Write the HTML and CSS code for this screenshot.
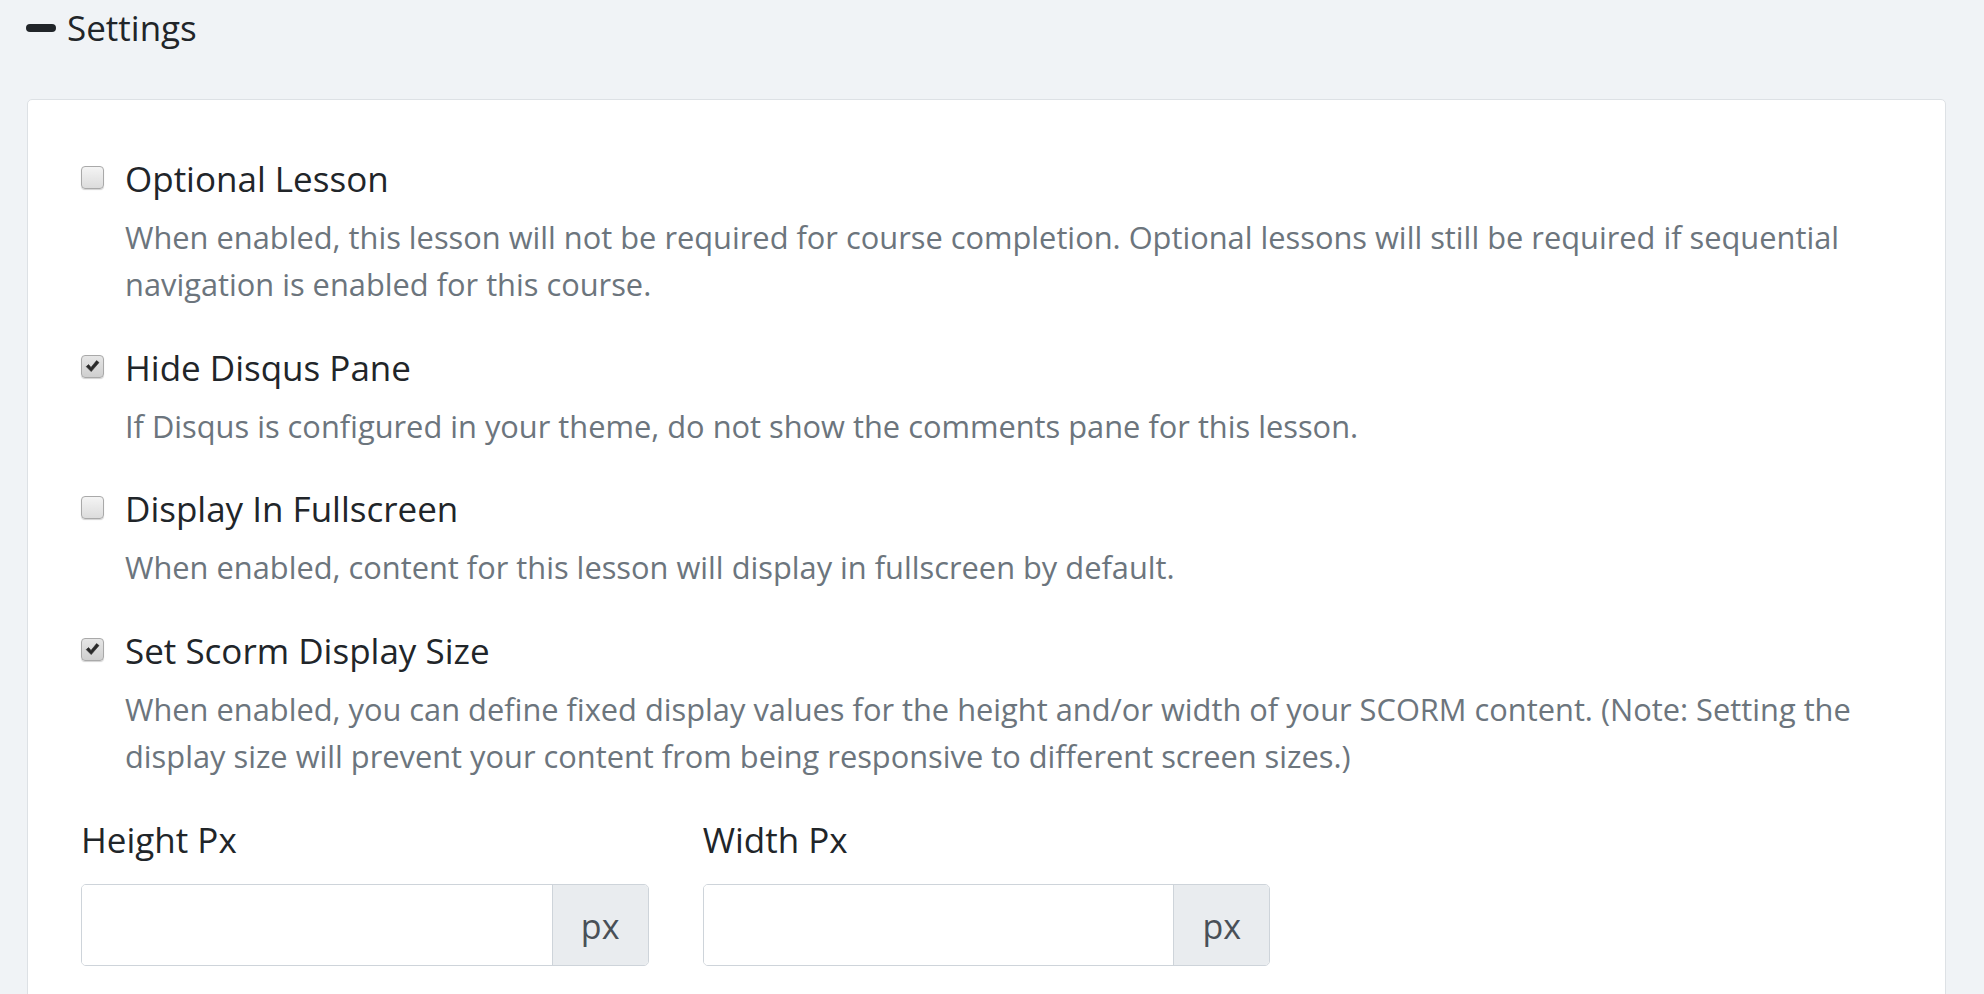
FILE: index.html
```html
<!DOCTYPE html>
<html lang="en">
<head>
<meta charset="utf-8">
<title>Settings</title>
<link rel="stylesheet" href="styles.css">
</head>
<body>
<div class="page">
  <div class="section-title">
    <span class="minus"></span>
    <span class="title-text">Settings</span>
  </div>
  <div class="card">
    <div class="form-check">
      <span class="checkbox"></span>
      <div class="check-body">
        <div class="check-label">Optional Lesson</div>
        <div class="check-desc">When enabled, this lesson will not be required for course completion. Optional lessons will still be required if sequential navigation is enabled for this course.</div>
      </div>
    </div>
    <div class="form-check">
      <span class="checkbox checked"><svg viewBox="0 0 21 21" width="21" height="21"><path d="M4.2 10.6 L6.6 8.6 L9 11.4 L14.6 4.6 L17 6.6 L9.2 15.6 Z" fill="#2a2a2a" stroke="#2a2a2a" stroke-width="0.6" stroke-linejoin="round"/></svg></span>
      <div class="check-body">
        <div class="check-label">Hide Disqus Pane</div>
        <div class="check-desc">If Disqus is configured in your theme, do not show the comments pane for this lesson.</div>
      </div>
    </div>
    <div class="form-check">
      <span class="checkbox"></span>
      <div class="check-body">
        <div class="check-label">Display In Fullscreen</div>
        <div class="check-desc">When enabled, content for this lesson will display in fullscreen by default.</div>
      </div>
    </div>
    <div class="form-check">
      <span class="checkbox checked"><svg viewBox="0 0 21 21" width="21" height="21"><path d="M4.2 10.6 L6.6 8.6 L9 11.4 L14.6 4.6 L17 6.6 L9.2 15.6 Z" fill="#2a2a2a" stroke="#2a2a2a" stroke-width="0.6" stroke-linejoin="round"/></svg></span>
      <div class="check-body">
        <div class="check-label">Set Scorm Display Size</div>
        <div class="check-desc">When enabled, you can define fixed display values for the height and/or width of your SCORM content. (Note: Setting the display size will prevent your content from being responsive to different screen sizes.)</div>
      </div>
    </div>
    <div class="size-row">
      <div class="field">
        <div class="field-label">Height Px</div>
        <div class="input-group">
          <input class="input" type="text">
          <span class="addon">px</span>
        </div>
      </div>
      <div class="field">
        <div class="field-label">Width Px</div>
        <div class="input-group">
          <input class="input" type="text">
          <span class="addon">px</span>
        </div>
      </div>
    </div>
  </div>
</div>
</body>
</html>
```
FILE: styles.css
```css
html, body {
  margin: 0;
  padding: 0;
}
body {
  background: #f0f3f6;
  font-family: "Open Sans", "Liberation Sans", sans-serif;
  color: #212529;
  height: 994px;
  overflow: hidden;
}
.page {
  padding: 4px 38px 0 27px;
}
.section-title {
  display: flex;
  align-items: center;
  height: 48px;
  margin-left: -1px;
  margin-bottom: 47px;
}
.minus {
  width: 30px;
  height: 8px;
  border-radius: 4px;
  background: #212529;
  margin-right: 11px;
}
.title-text {
  font-size: 35px;
  line-height: 48px;
}
.card {
  background: #fff;
  border: 1px solid #dde1e5;
  border-radius: 5px;
  padding: 55px 53px 80px 53px;
}
.form-check {
  display: flex;
  align-items: flex-start;
  gap: 21px;
  margin-bottom: 36px;
}
.checkbox {
  flex: 0 0 auto;
  width: 21px;
  height: 21px;
  margin-top: 11px;
  border: 1px solid #a9a9a9;
  border-radius: 4px;
  background: linear-gradient(#f4f4f4, #dcdcdc);
  box-shadow: 0 1px 1px rgba(0, 0, 0, 0.18);
  overflow: hidden;
}
.checkbox svg {
  display: block;
}
.checkbox.checked {
  background: linear-gradient(#e6e6e6, #cfcfcf);
}
.check-body {
  flex: 1 1 auto;
}
.check-label {
  font-size: 35px;
  line-height: 48px;
  color: #212529;
}
.check-desc {
  margin-top: 11px;
  font-size: 30.8px;
  line-height: 46.8px;
  color: #6c757d;
}
.size-row {
  display: grid;
  grid-template-columns: repeat(3, 1fr);
  column-gap: 54px;
  margin-top: 35px;
}
.field-label {
  font-size: 35px;
  line-height: 48px;
  color: #212529;
  margin-bottom: 20px;
}
.input-group {
  display: flex;
  height: 82px;
  border: 1px solid #ced4da;
  border-radius: 5px;
  box-sizing: border-box;
  overflow: hidden;
}
.input {
  flex: 1 1 auto;
  min-width: 0;
  border: 0;
  margin: 0;
  padding: 0 20px;
  background: #fff;
  font-family: inherit;
  font-size: 32px;
  outline: none;
}
.addon {
  flex: 0 0 96px;
  display: flex;
  align-items: center;
  justify-content: center;
  border-left: 1px solid #ced4da;
  background: #e9ecef;
  color: #495057;
  font-size: 34px;
  padding-top: 2px;
  box-sizing: border-box;
}
```
